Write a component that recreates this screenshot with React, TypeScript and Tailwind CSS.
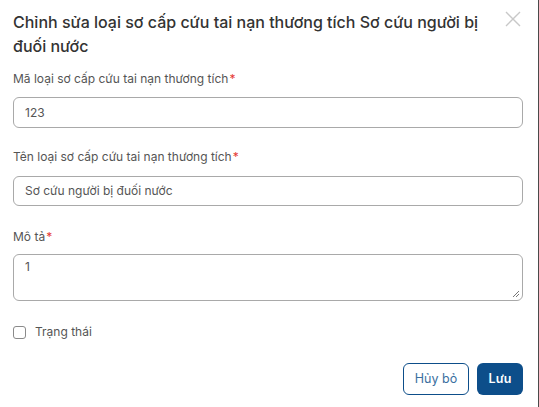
import React from "react";

export default function App() {
  return (
    <div className="w-[539px] h-[407px] bg-white border-r border-[#4a4a4a] relative" style={{ fontFamily: "Inter, 'Noto Sans', sans-serif" }}>
      <div className="pl-[13px] pr-[16px] pt-[10px]">
        <div className="flex items-start justify-between">
          <h2 className="text-[16px] leading-[24px] font-medium text-[#333] w-[480px]">
            Chỉnh sửa loại sơ cấp cứu tai nạn thương tích Sơ cứu người bị đuối nước
          </h2>
          <button className="mt-[1px] mr-[1px] text-[#c8c8c8]">
            <svg width="16" height="16" viewBox="0 0 16 16" fill="none" stroke="currentColor" strokeWidth="1.4">
              <path d="M1 1L15 15M15 1L1 15" />
            </svg>
          </button>
        </div>

        <div className="mt-[12px] w-[510px]">
          <label className="block text-[12px] leading-[18px] text-[#555]">
            Mã loại sơ cấp cứu tai nạn thương tích<span className="text-[#e53935] ml-[1px]">*</span>
          </label>
          <div className="mt-[9px] h-[31px] rounded-[6px] border border-[#a9a9a9] flex items-center px-[11px] text-[12px] text-[#555]">
            123
          </div>

          <label className="block mt-[20px] text-[12px] leading-[18px] text-[#555]">
            Tên loại sơ cấp cứu tai nạn thương tích<span className="text-[#e53935] ml-[1px]">*</span>
          </label>
          <div className="mt-[10px] h-[30px] rounded-[6px] border border-[#a9a9a9] flex items-center px-[11px] text-[12px] text-[#555]">
            Sơ cứu người bị đuối nước
          </div>

          <label className="block mt-[22px] text-[12px] leading-[18px] text-[#555]">
            Mô tả<span className="text-[#e53935] ml-[1px]">*</span>
          </label>
          <div className="mt-[8px] h-[47px] rounded-[6px] border border-[#a9a9a9] relative px-[11px] pt-[3px] text-[12px] text-[#555]">
            1
            <svg className="absolute right-[2px] bottom-[2px]" width="8" height="8" viewBox="0 0 8 8" stroke="#777" strokeWidth="1">
              <path d="M7 1L1 7M7 4L4 7" />
            </svg>
          </div>

          <div className="mt-[22px] h-[18px] flex items-center gap-[9px]">
            <div className="w-[13px] h-[13px] rounded-[3px] border border-[#8a8a8a] bg-white" />
            <span className="text-[12px] text-[#555]">Trạng thái</span>
          </div>

          <div className="mt-[22px] flex justify-end gap-[8px]">
            <button className="w-[66px] h-[32px] rounded-[6px] border border-[#0d4e8a] text-[#3a6fa0] text-[12.5px] bg-white">
              Hủy bỏ
            </button>
            <button className="w-[46px] h-[32px] rounded-[6px] bg-[#0d4e8a] text-white text-[12.5px] font-semibold">
              Lưu
            </button>
          </div>
        </div>
      </div>
    </div>
  );
}
